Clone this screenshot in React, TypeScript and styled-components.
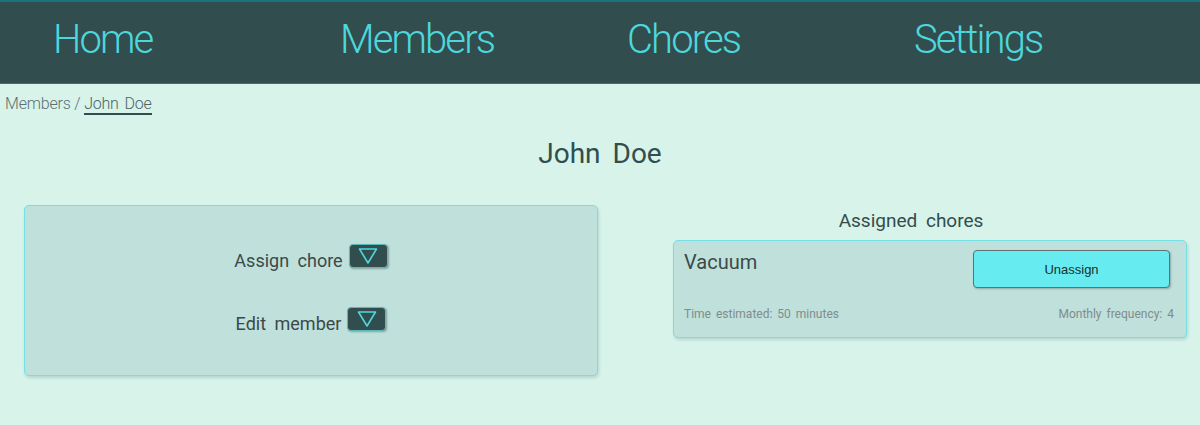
import React from "react";
import styled, { createGlobalStyle } from "styled-components";

const GlobalStyle = createGlobalStyle`
  html, body {
    margin: 0;
    padding: 0;
    background: #d7f3ea;
  }
  body {
    font-family: "Roboto", "Noto Sans", sans-serif;
    color: #324d4d;
    min-height: 425px;
  }
`;

const Nav = styled.nav`
  border-top: 2px solid #1a747b;
  border-bottom: 1px solid #4f6868;
  background: #324d4d;
  height: 81px;
  box-sizing: content-box;
  display: grid;
  grid-template-columns: repeat(4, 287px);
  align-items: center;
  padding-left: 53px;
`;

const NavLink = styled.a`
  font-family: "Roboto", sans-serif;
  font-size: 40px;
  font-weight: 300;
  letter-spacing: -1.9px;
  color: #4dd7dd;
  text-decoration: none;
  line-height: 1;
  margin-top: -6px;
`;

const Crumbs = styled.div`
  padding: 10px 0 0 5px;
  font-size: 16px;
  font-weight: 300;
  color: #5f7070;
  line-height: 20px;
  letter-spacing: -0.2px;
`;

const CrumbCurrent = styled.span`
  display: inline-block;
  color: #4d6464;
  border-bottom: 2px solid #324d4d;
  line-height: 19px;
  word-spacing: 2px;
`;

const Title = styled.h1`
  margin: 22px 0 0;
  text-align: center;
  font-size: 28px;
  font-weight: 400;
  line-height: 34px;
  word-spacing: 5px;
  color: #324d4d;
`;

const Main = styled.div`
  display: flex;
  align-items: flex-start;
  padding: 0 13px 0 24px;
  margin-top: 34px;
  gap: 75px;
`;

const Card = styled.div`
  background: #c0e0db;
  border: 1px solid #74e0e5;
  border-radius: 5px;
  box-shadow: 1px 2px 3px rgba(60, 110, 110, 0.2);
  box-sizing: border-box;
`;

const ActionsCard = styled(Card)`
  width: 574px;
  height: 171px;
  display: flex;
  flex-direction: column;
  justify-content: center;
  align-items: center;
  gap: 42px;
  padding-top: 2px;
`;

const ActionRow = styled.div`
  display: flex;
  align-items: center;
  gap: 6px;
  font-size: 18px;
  word-spacing: 4px;
  color: #3a4a4a;
`;

const DropButton = styled.button`
  width: 39px;
  height: 24px;
  padding: 0;
  background: #324d4d;
  border: 1px solid #5fb8b8;
  border-radius: 4px;
  box-shadow: 1px 1px 2px rgba(40, 70, 70, 0.4);
  display: flex;
  align-items: center;
  justify-content: center;
  margin-top: -8px;
`;

const Side = styled.div`
  width: 514px;
  margin-top: 4px;
`;

const SideTitle = styled.h2`
  margin: 0 38px 7px 0;
  text-align: center;
  font-size: 19px;
  font-weight: 400;
  line-height: 24px;
  word-spacing: 4px;
  color: #324d4d;
`;

const ChoreCard = styled(Card)`
  height: 98px;
  padding: 9px 12px 0 10px;
  display: grid;
  grid-template-columns: 1fr auto;
  grid-template-rows: 56px auto;
`;

const ChoreName = styled.div`
  font-size: 20px;
  line-height: 24px;
  color: #3a4a4a;
`;

const UnassignButton = styled.button`
  width: 197px;
  height: 38px;
  margin-right: 4px;
  background: #66ebf0;
  border: 1px solid #5f7272;
  border-radius: 4px;
  box-shadow: 1px 1px 2px rgba(40, 70, 70, 0.35);
  font-family: "Liberation Sans", Arial, sans-serif;
  font-size: 13px;
  color: #1d2e2e;
`;

const Meta = styled.div<{ $right?: boolean }>`
  font-size: 12px;
  color: #7f8c8c;
  word-spacing: 2px;
  text-align: ${(p) => (p.$right ? "right" : "left")};
  line-height: 16px;
`;

const Triangle = () => (
  <svg width="22" height="18" viewBox="0 0 22 18">
    <path d="M2.5 2 L19.5 2 L11 16 Z" fill="none" stroke="#4dd7dd" strokeWidth="1.6" strokeLinejoin="round" />
  </svg>
);

export default function App() {
  return (
    <>
      <GlobalStyle />
      <Nav>
        <NavLink>Home</NavLink>
        <NavLink>Members</NavLink>
        <NavLink>Chores</NavLink>
        <NavLink>Settings</NavLink>
      </Nav>
      <Crumbs>
        Members / <CrumbCurrent>John Doe</CrumbCurrent>
      </Crumbs>
      <Title>John Doe</Title>
      <Main>
        <ActionsCard>
          <ActionRow>
            Assign chore
            <DropButton aria-label="Assign chore">
              <Triangle />
            </DropButton>
          </ActionRow>
          <ActionRow>
            Edit member
            <DropButton aria-label="Edit member">
              <Triangle />
            </DropButton>
          </ActionRow>
        </ActionsCard>
        <Side>
          <SideTitle>Assigned chores</SideTitle>
          <ChoreCard>
            <ChoreName>Vacuum</ChoreName>
            <UnassignButton>Unassign</UnassignButton>
            <Meta>Time estimated: 50 minutes</Meta>
            <Meta $right>Monthly frequency: 4</Meta>
          </ChoreCard>
        </Side>
      </Main>
    </>
  );
}
